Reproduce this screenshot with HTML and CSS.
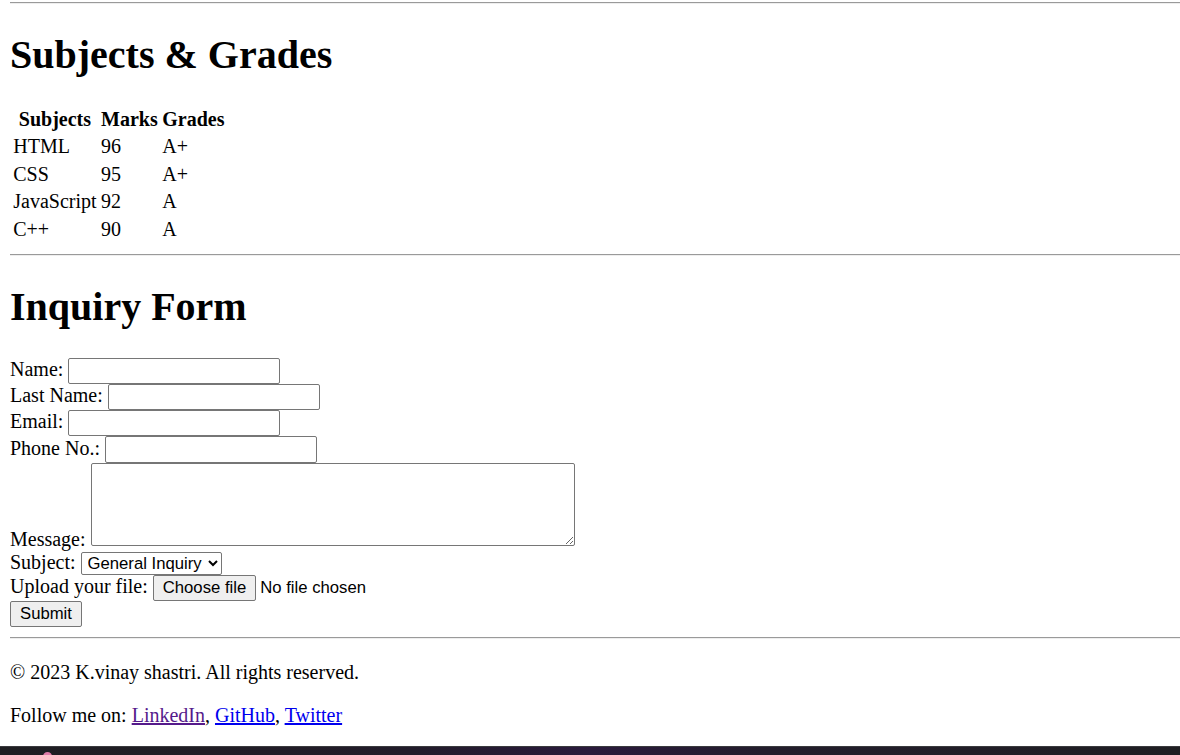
FILE: index.html
```html
<!DOCTYPE html>
<html lang="en">
<head>
<meta charset="utf-8">
<title>Subjects &amp; Grades</title>
<link rel="stylesheet" href="styles.css">
</head>
<body class="page">
<main class="content">
  <hr class="rule rule-top">
  <section class="grades">
    <h1 class="heading">Subjects &amp; Grades</h1>
    <table class="grade-table">
      <thead>
        <tr><th class="th">Subjects</th><th class="th">Marks</th><th class="th">Grades</th></tr>
      </thead>
      <tbody>
        <tr><td class="td">HTML</td><td class="td">96</td><td class="td">A+</td></tr>
        <tr><td class="td">CSS</td><td class="td">95</td><td class="td">A+</td></tr>
        <tr><td class="td">JavaScript</td><td class="td">92</td><td class="td">A</td></tr>
        <tr><td class="td">C++</td><td class="td">90</td><td class="td">A</td></tr>
      </tbody>
    </table>
  </section>
  <hr class="rule">
  <section class="inquiry">
    <h1 class="heading">Inquiry Form</h1>
    <form class="form">
      <label class="label">Name: <input class="field" type="text"></label><br>
      <label class="label">Last Name: <input class="field" type="text"></label><br>
      <label class="label">Email: <input class="field" type="email"></label><br>
      <label class="label">Phone No.: <input class="field" type="tel"></label><br>
      <label class="label">Message: <textarea class="message"></textarea></label><br>
      <label class="label">Subject: <select class="select"><option>General Inquiry</option><option>Feedback</option></select></label><br>
      <span class="label">Upload your file: <button type="button" class="btn">Choose file</button> <span class="file-status">No file chosen</span></span><br>
      <button type="submit" class="btn">Submit</button>
    </form>
  </section>
  <hr class="rule">
  <footer class="footer">
    <p class="para para-first">© 2023 K.vinay shastri. All rights reserved.</p>
    <p class="para">Follow me on: <a class="link link-visited" href="#linkedin">LinkedIn</a>, <a class="link" href="#github">GitHub</a>, <a class="link" href="#twitter">Twitter</a></p>
  </footer>
</main>
<div class="taskbar"><span class="taskbar-icon"></span></div>
</body>
</html>
```
FILE: styles.css
```css
html, body {
  height: 100%;
}
.page {
  margin: 0;
  font-family: "Liberation Serif", "Times New Roman", serif;
  font-size: 20px;
  color: #000;
  background: #fff;
  overflow: hidden;
  position: relative;
}
.content {
  padding: 2px 0 0 10px;
}
.rule {
  margin: 10px 0;
  border: 0;
  border-top: 1px solid #9a9a9a;
  border-bottom: 1px solid #eeeeee;
  height: 0;
}
.rule-top {
  margin-top: 0;
}
.heading {
  font-size: 40px;
  font-weight: bold;
  margin: 26.8px 0;
  line-height: normal;
}
.grade-table {
  border-spacing: 2.5px;
  margin-top: 0.5px;
}
.th, .td {
  padding: 1px 1.25px;
  font-size: 20px;
  line-height: 23.5px;
}
.th {
  font-weight: bold;
  text-align: center;
}
.td {
  text-align: left;
}
.form {
  line-height: 23px;
  padding-top: 1px;
}
.label {
  font-size: 20px;
}
.field {
  box-sizing: border-box;
  width: 212px;
  height: 26.25px;
  border: 1px solid #767676;
  border-radius: 2px;
  padding: 1px 2px;
  font-family: "Liberation Sans", Arial, sans-serif;
  font-size: 16.7px;
  margin: 0;
  background: #fff;
}
.message {
  box-sizing: border-box;
  width: 484px;
  height: 83px;
  border: 1px solid #767676;
  border-radius: 2px;
  margin: 0;
  padding: 2px;
  font-family: "Liberation Mono", monospace;
  font-size: 16.7px;
  resize: both;
}
.select {
  box-sizing: border-box;
  width: 141px;
  height: 23px;
  border: 1px solid #767676;
  border-radius: 2px;
  font-family: "Liberation Sans", Arial, sans-serif;
  font-size: 16.7px;
  margin: 0;
  padding: 0 0 0 2px;
  background: #fff;
  color: #000;
}
.btn {
  box-sizing: border-box;
  height: 26.25px;
  padding: 0 9px;
  border: 1px solid #767676;
  border-radius: 2px;
  background: #efefef;
  font-family: "Liberation Sans", Arial, sans-serif;
  font-size: 16.7px;
  color: #000;
  margin: 0;
}
.file-status {
  font-family: "Liberation Sans", Arial, sans-serif;
  font-size: 16.7px;
  margin-left: -1px;
}
.para {
  margin: 20px 0;
  line-height: 23px;
}
.para-first {
  margin-top: 22px;
}
.link {
  color: #0000ee;
  text-decoration: underline;
}
.link-visited {
  color: #551a8b;
}
.taskbar {
  position: absolute;
  left: 0;
  right: 0;
  top: 746px;
  height: 9px;
  border-top: 1px solid #3a3a3e;
  box-sizing: border-box;
  background: linear-gradient(90deg, #1f1e22 0%, #221c2a 35%, #2a1a3c 50%, #231d2c 65%, #1f1e22 100%);
}
.taskbar-icon {
  position: absolute;
  left: 43px;
  top: 5px;
  width: 9px;
  height: 9px;
  border-radius: 50%;
  background: #e07aa8;
}
```
